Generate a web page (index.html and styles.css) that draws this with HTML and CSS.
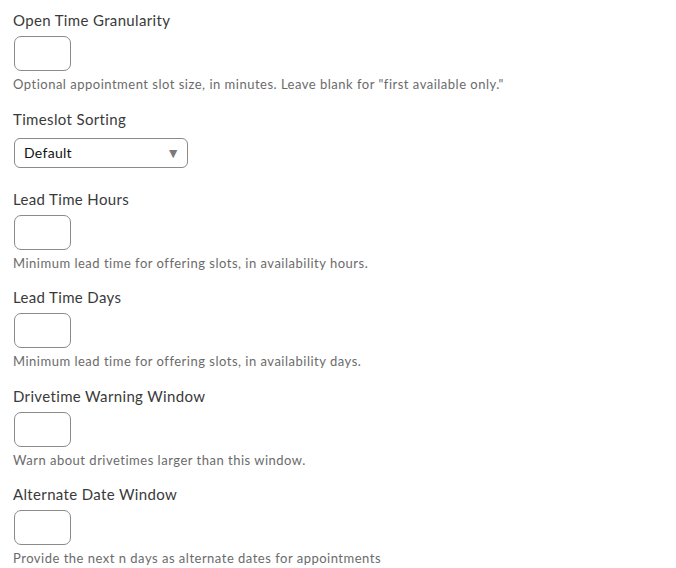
FILE: index.html
```html
<!DOCTYPE html>
<html>
<head>
<meta charset="utf-8">
<link rel="stylesheet" href="styles.css">
</head>
<body>
<form class="settings">
  <div class="field">
    <label class="label">Open Time Granularity</label>
    <input class="num" type="text">
    <div class="help">Optional appointment slot size, in minutes. Leave blank for "first available only."</div>
  </div>
  <div class="field field-select">
    <label class="label">Timeslot Sorting</label>
    <div class="select">
      <span class="select-value">Default</span>
      <span class="select-arrow">&#9660;</span>
    </div>
  </div>
  <div class="field">
    <label class="label">Lead Time Hours</label>
    <input class="num" type="text">
    <div class="help">Minimum lead time for offering slots, in availability hours.</div>
  </div>
  <div class="field">
    <label class="label">Lead Time Days</label>
    <input class="num" type="text">
    <div class="help">Minimum lead time for offering slots, in availability days.</div>
  </div>
  <div class="field">
    <label class="label">Drivetime Warning Window</label>
    <input class="num" type="text">
    <div class="help">Warn about drivetimes larger than this window.</div>
  </div>
  <div class="field">
    <label class="label">Alternate Date Window</label>
    <input class="num" type="text">
    <div class="help">Provide the next n days as alternate dates for appointments</div>
  </div>
</form>
</body>
</html>
```
FILE: styles.css
```css
html, body {
  margin: 0;
  padding: 0;
  background: #fff;
}
body {
  font-family: "Lato", "Open Sans", sans-serif;
  color: #3a3a3a;
}
.settings {
  display: flex;
  flex-direction: column;
  padding: 10px 13px 0;
}
.field {
  display: flex;
  flex-direction: column;
  align-items: flex-start;
  margin-bottom: 15.5px;
}
.field-select {
  margin-bottom: 21px;
}
.label {
  font-size: 15px;
  line-height: 20px;
  height: 20px;
  color: #3a3a3a;
  margin-bottom: 6px;
  letter-spacing: 0.35px;
}
.field-select .label {
  margin-bottom: 9px;
}
.num {
  box-sizing: border-box;
  width: 57px;
  height: 35px;
  margin: 0 0 4px 1px;
  border: 1px solid #8a8a8a;
  border-radius: 7px;
  background: #fff;
  padding: 0;
  font: inherit;
}
.help {
  font-size: 13px;
  line-height: 18px;
  color: #6b6b6b;
  letter-spacing: 0.5px;
}
.select {
  box-sizing: border-box;
  width: 174px;
  height: 30px;
  margin-left: 1px;
  border: 1px solid #8a8a8a;
  border-radius: 6px;
  display: flex;
  align-items: center;
  justify-content: space-between;
  padding: 0 7px 0 9px;
}
.select-value {
  font-size: 14px;
  color: #111;
  letter-spacing: 0.3px;
}
.select-arrow {
  font-size: 14px;
  color: #7a7a7a;
}
```
